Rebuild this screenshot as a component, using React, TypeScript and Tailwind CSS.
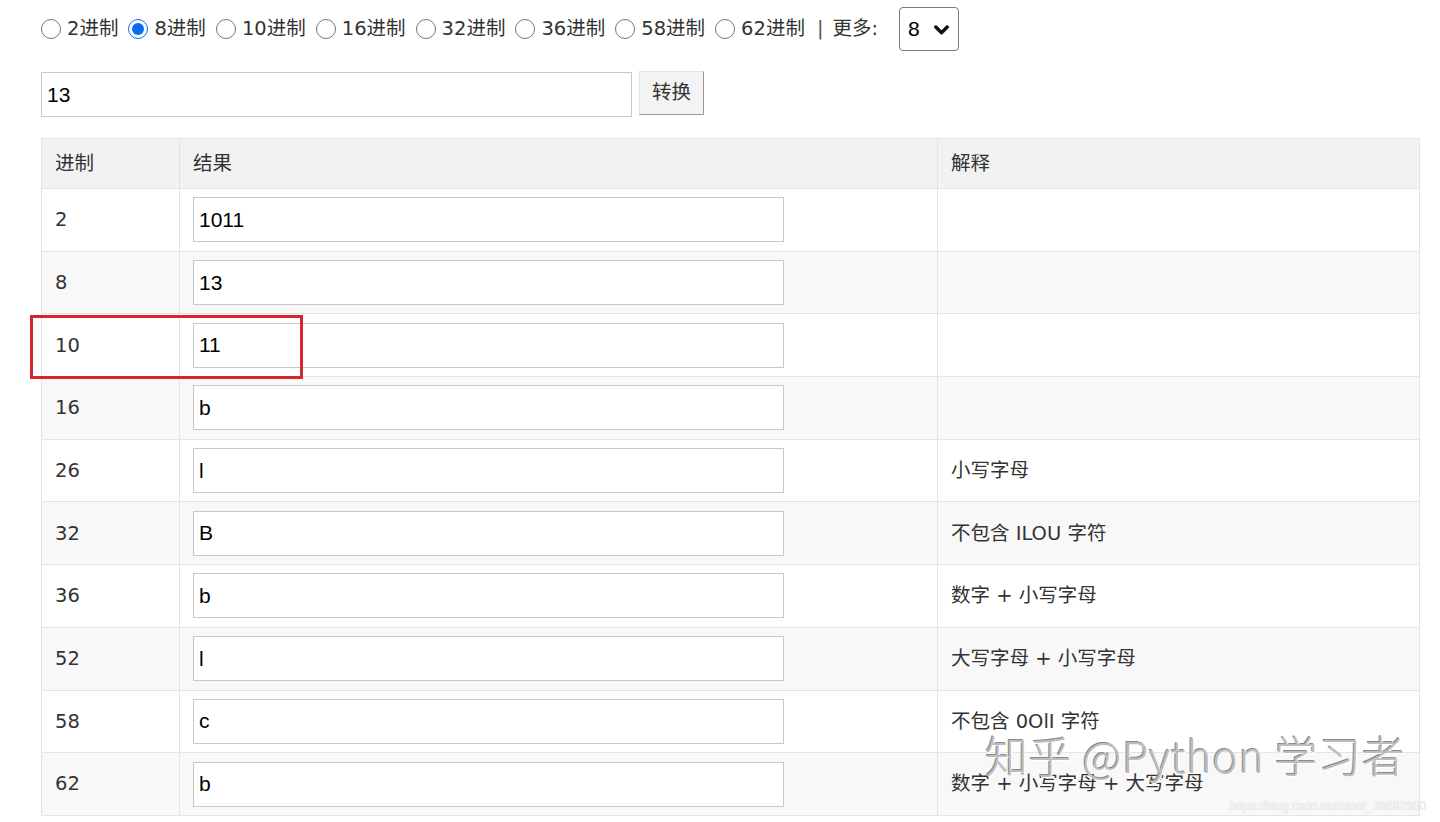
import React from "react";

const BASES = ["2", "8", "10", "16", "32", "36", "58", "62"];

const ROWS: { base: string; value: string; note: string }[] = [
  { base: "2", value: "1011", note: "" },
  { base: "8", value: "13", note: "" },
  { base: "10", value: "11", note: "" },
  { base: "16", value: "b", note: "" },
  { base: "26", value: "l", note: "小写字母" },
  { base: "32", value: "B", note: "不包含 ILOU 字符" },
  { base: "36", value: "b", note: "数字 + 小写字母" },
  { base: "52", value: "l", note: "大写字母 + 小写字母" },
  { base: "58", value: "c", note: "不包含 0OlI 字符" },
  { base: "62", value: "b", note: "数字 + 小写字母 + 大写字母" },
];

const FONT = "font-['DejaVu_Sans','Noto_Sans_CJK_SC',sans-serif]";
const INPUT_FONT = "font-['Liberation_Sans','Noto_Sans_CJK_SC',sans-serif]";

export default function App() {
  return (
    <div className={`relative w-[1440px] h-[822px] overflow-hidden bg-white text-[#333] ${FONT}`}>
      <div className="pl-[41px] pr-[21px]">
        {/* base picker */}
        <div className="flex items-center h-[58px] text-[19.5px]">
          {BASES.map((b) => (
            <label key={b} className="flex items-center mr-[10px]">
              <input
                type="radio"
                name="base"
                defaultChecked={b === "8"}
                className="w-[20px] h-[20px] m-0 accent-[#0a6cf5]"
              />
              <span className="ml-[6px]">{b}进制</span>
            </label>
          ))}
          <span className="ml-[2px] text-[#555]">|</span>
          <span className="ml-[9px]">更多:</span>
          <div className="relative ml-[21px] w-[60px] h-[44px] border border-[#7a7a7a] rounded-[4px] flex items-center pl-[8px] bg-white">
            <span className={`text-[21px] text-black ${INPUT_FONT}`}>8</span>
            <svg className="absolute right-[9px] top-[17px]" width="15" height="11" viewBox="0 0 15 11">
              <path d="M1.8 2 L7.5 7.8 L13.2 2" fill="none" stroke="#111" strokeWidth="3.4" strokeLinecap="round" strokeLinejoin="round" />
            </svg>
          </div>
        </div>

        {/* input row */}
        <div className="flex items-start mt-[14px]">
          <input
            defaultValue="13"
            className={`w-[591px] h-[45px] border border-[#c8c8c8] px-[5px] text-[21px] text-black outline-none ${INPUT_FONT}`}
          />
          <button className="ml-[7px] -mt-[1px] w-[65px] h-[44px] bg-[#f3f3f3] border border-[#e2e2e2] border-r-[#9a9a9a] border-b-[#9a9a9a] text-[19.5px] text-[#333]">
            转换
          </button>
        </div>

        {/* result table */}
        <div className="relative mt-[21px]">
          <table className="w-[1378px] border-collapse table-fixed text-[19.5px]">
            <colgroup>
              <col className="w-[138px]" />
              <col className="w-[758px]" />
              <col className="w-[482px]" />
            </colgroup>
            <thead>
              <tr className="h-[50px] bg-[#f2f2f2]">
                <th className="border border-[#e4e4e4] text-left font-normal px-[13px]">进制</th>
                <th className="border border-[#e4e4e4] text-left font-normal px-[13px]">结果</th>
                <th className="border border-[#e4e4e4] text-left font-normal px-[13px]">解释</th>
              </tr>
            </thead>
            <tbody>
              {ROWS.map((r, i) => (
                <tr key={r.base} className={`h-[62.7px] ${i % 2 === 1 ? "bg-[#f8f8f8]" : "bg-white"}`}>
                  <td className="border border-[#e4e4e4] px-[13px]">{r.base}</td>
                  <td className="border border-[#e4e4e4] px-[13px]">
                    <input
                      readOnly
                      value={r.value}
                      className={`w-[591px] h-[45px] border border-[#c8c8c8] bg-white px-[5px] text-[21px] text-black outline-none ${INPUT_FONT}`}
                    />
                  </td>
                  <td className="border border-[#e4e4e4] px-[13px]">{r.note}</td>
                </tr>
              ))}
            </tbody>
          </table>

          {/* red highlight annotation */}
          <div className="absolute left-[-11px] top-[177px] w-[273px] h-[64px] border-[3px] border-[#d7262b] pointer-events-none" />
        </div>
      </div>

      {/* watermarks */}
      <div className="absolute left-[985px] top-[733px] text-[43px] leading-none text-[#bdbdbd] tracking-[0.6px] font-['Noto_Sans_CJK_SC',sans-serif] font-light [text-shadow:1px_1px_0_#fff,-1px_-1px_0_#8a8a8a] pointer-events-none">
        知乎 @Python 学习者
      </div>
      <div className="absolute left-[1230px] top-[800px] text-[12px] leading-none text-[#f4f4f4] font-['Liberation_Sans',sans-serif] [text-shadow:0_0_1px_#c9c9c9] pointer-events-none">
        https://blog.csdn.net/sinat_38682860
      </div>
    </div>
  );
}
